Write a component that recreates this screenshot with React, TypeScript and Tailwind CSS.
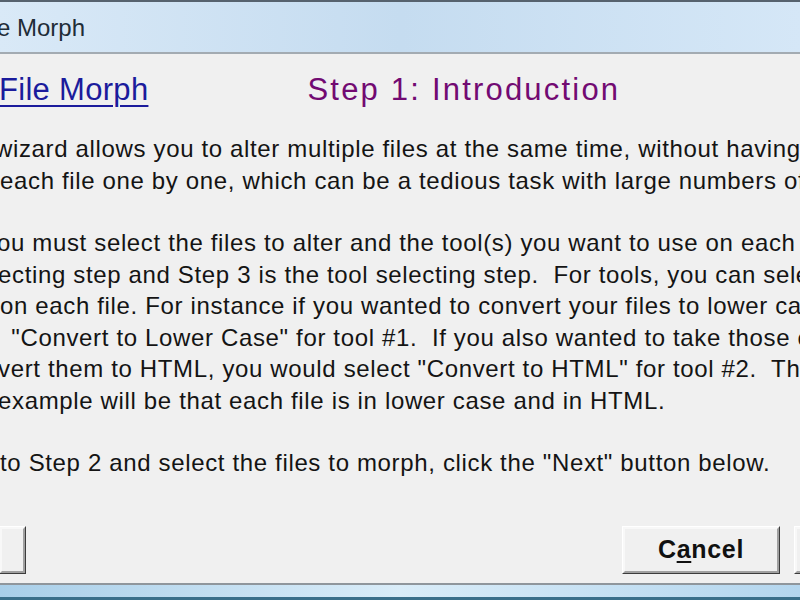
import React from "react";

const lines: { text: string; shift: string; gapBefore?: boolean }[] = [
	{ text: "wizard allows you to alter multiple files at the same time, without having to open", shift: "-ml-[5px]" },
	{ text: "each file one by one, which can be a tedious task with large numbers of files.", shift: "ml-0" },
	{ text: "ou must select the files to alter and the tool(s) you want to use on each file.", shift: "-ml-[3px]", gapBefore: true },
	{ text: "ecting step and Step 3 is the tool selecting step.  For tools, you can select up to", shift: "-ml-[2px]" },
	{ text: "on each file. For instance if you wanted to convert your files to lower case, you", shift: "ml-0" },
	{ text: " \"Convert to Lower Case\" for tool #1.  If you also wanted to take those changes", shift: "ml-[4px]" },
	{ text: "vert them to HTML, you would select \"Convert to HTML\" for tool #2.  The result", shift: "-ml-[2px]" },
	{ text: "example will be that each file is in lower case and in HTML.", shift: "-ml-[2px]" },
	{ text: "to Step 2 and select the files to morph, click the \"Next\" button below.", shift: "ml-0", gapBefore: true },
];

function Button({ children, className }: { children?: React.ReactNode; className: string }) {
	return (
		<div className={"shrink-0 h-[48px] border border-t-[#ffffff] border-l-[#ffffff] border-r-[#3c3c3c] border-b-[#3c3c3c] bg-[#f0f0f0] " + className}>
			<div className="h-full w-full border-2 border-t-[#f8f8f8] border-l-[#f8f8f8] border-r-[#a0a0a0] border-b-[#a0a0a0] flex items-center justify-center text-[25px] font-bold tracking-[0.7px] text-[#111111]">
				{children}
			</div>
		</div>
	);
}

export default function App() {
	return (
		<div className="w-[800px] h-[600px] overflow-hidden bg-[#f0f0f0] flex flex-col" style={{ fontFamily: '"Liberation Sans", Arial, sans-serif' }}>
			{/* title bar */}
			<div className="h-[2px] bg-[#56626e]" />
			<div className="h-[50px] bg-gradient-to-r from-[#d9e9f7] via-[#c5dcf0] to-[#d5e7f7] flex items-center">
				<span className="-ml-[3px] text-[24px] text-[#1f2d38] pt-[2px]">e Morph</span>
			</div>
			<div className="h-[2px] bg-[#a3abb2]" />

			{/* headings */}
			<div className="flex items-end h-[61px] pb-[2px]">
				<span className="shrink-0 text-[31px] text-[#1b1b9c] underline underline-offset-[5px] decoration-[2px] -ml-[1px] tracking-[0.3px]">File Morph</span>
				<span className="shrink-0 text-[31px] text-[#720a72] ml-[159px] tracking-[2.2px]">Step 1: Introduction</span>
			</div>

			{/* body */}
			<div className="mt-[18px] text-[24px] leading-[31.5px] tracking-[0.65px] text-[#141414]">
				{lines.map((l, i) => (
					<div key={i} className={"whitespace-pre " + l.shift + (l.gapBefore ? " mt-[31px]" : "")}>
						{l.text}
					</div>
				))}
			</div>

			{/* buttons */}
			<div className="flex mt-[47px]">
				<Button className="w-[27px] -ml-px" />
				<Button className="w-[158px] ml-[596px]">
					C<span className="underline underline-offset-[3px]">a</span>ncel
				</Button>
				<Button className="w-[40px] ml-[14px]" />
			</div>

			<div className="flex-1" />
			<div className="h-[2px] bg-[#8f969c]" />
			<div className="h-[12px] bg-gradient-to-r from-[#a9cfe9] via-[#d9ecf8] to-[#b4d6ee]" />
			<div className="h-[3px] bg-[#3a6f8a]" />
		</div>
	);
}
